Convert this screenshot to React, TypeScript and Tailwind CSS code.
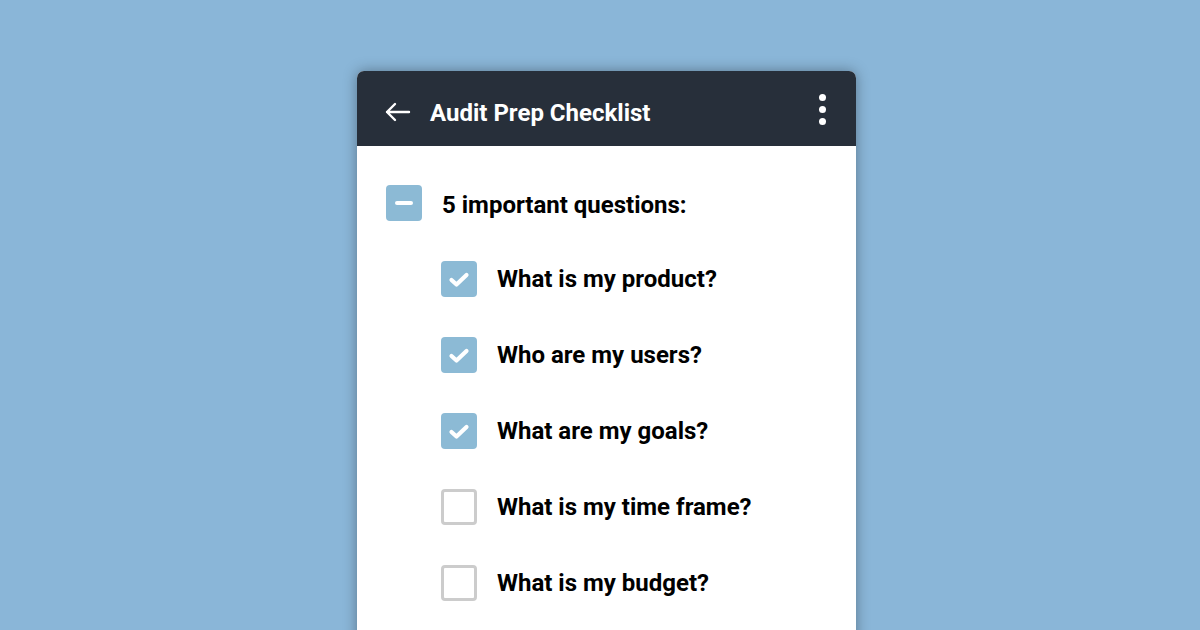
import React from "react";

type Item = { label: string; checked: boolean };

const items: Item[] = [
  { label: "What is my product?", checked: true },
  { label: "Who are my users?", checked: true },
  { label: "What are my goals?", checked: true },
  { label: "What is my time frame?", checked: false },
  { label: "What is my budget?", checked: false },
];

const CheckBox: React.FC<{ checked: boolean }> = ({ checked }) =>
  checked ? (
    <div className="w-[36px] h-[36px] rounded-[4px] bg-[#8cbad5] flex items-center justify-center shrink-0">
      <svg width="22" height="22" viewBox="0 0 22 22" fill="none">
        <path
          d="M3.5 12 L8.5 16.5 L18.5 7"
          stroke="white"
          strokeWidth="4.2"
          strokeLinecap="round"
          strokeLinejoin="round"
        />
      </svg>
    </div>
  ) : (
    <div className="w-[36px] h-[36px] rounded-[4px] border-[3px] border-[#cccccc] bg-white shrink-0" />
  );

const App: React.FC = () => {
  return (
    <div
      className="w-[1200px] h-[630px] overflow-hidden bg-[#8ab6d8] pl-[357px] pt-[71px]"
      style={{ fontFamily: "Roboto, 'Liberation Sans', sans-serif" }}
    >
      <div className="w-[499px] h-[600px] bg-white rounded-t-[7px] overflow-hidden shadow-[0_0_14px_rgba(0,0,0,0.35)]">
        <div className="h-[75px] bg-[#272f3a] flex items-center pl-[28px] pr-[30px]">
          <svg width="26" height="20" viewBox="0 0 26 20" fill="none" className="shrink-0 mt-[7px]">
            <path
              d="M2 10 H24 M10 2 L2 10 L10 18"
              stroke="white"
              strokeWidth="2.4"
              strokeLinecap="round"
              strokeLinejoin="round"
            />
          </svg>
          <h1 className="ml-[19px] mt-[8px] text-white text-[24px] font-bold flex-1">
            Audit Prep Checklist
          </h1>
          <div className="flex flex-col gap-[5px] items-center mt-[2px]">
            <span className="w-[7px] h-[7px] rounded-full bg-white" />
            <span className="w-[7px] h-[7px] rounded-full bg-white" />
            <span className="w-[7px] h-[7px] rounded-full bg-white" />
          </div>
        </div>

        <div className="pt-[39px] pl-[29px]">
          <div className="flex items-center h-[36px]">
            <div className="w-[36px] h-[36px] rounded-[4px] bg-[#8cbad5] flex items-center justify-center shrink-0">
              <span className="w-[18px] h-[4px] rounded-full bg-white" />
            </div>
            <span className="ml-[20px] mt-[3px] text-[24px] font-bold text-black">
              5 important questions:
            </span>
          </div>

          <div className="pl-[55px] pt-[40px] flex flex-col gap-[40px]">
            {items.map((item) => (
              <div key={item.label} className="flex items-center h-[36px]">
                <CheckBox checked={item.checked} />
                <span className="ml-[20px] text-[24px] font-bold text-black">
                  {item.label}
                </span>
              </div>
            ))}
          </div>
        </div>
      </div>
    </div>
  );
};

export default App;
